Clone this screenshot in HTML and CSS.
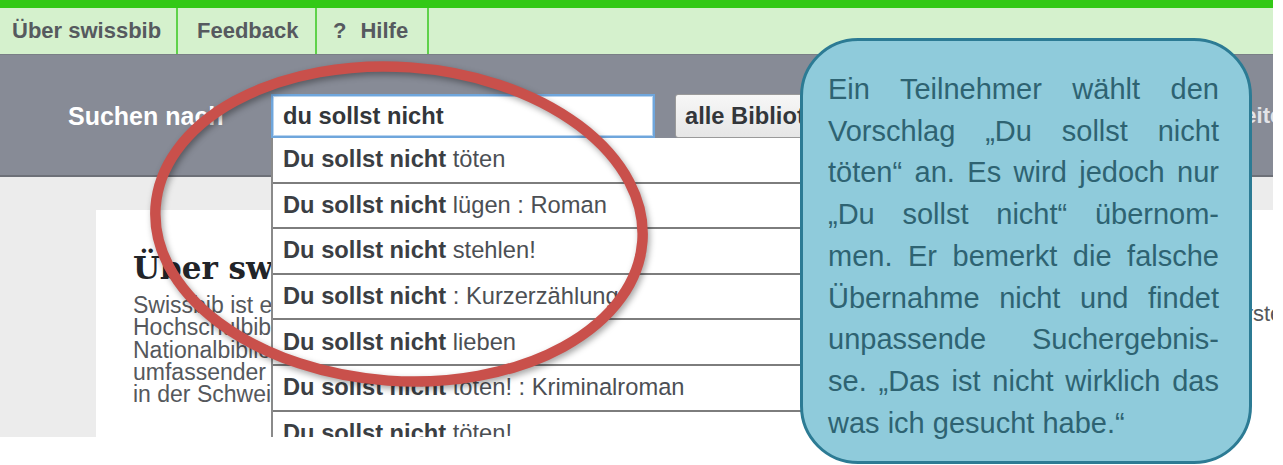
FILE: index.html
```html
<!DOCTYPE html>
<html lang="de">
<head>
<meta charset="utf-8">
<title>swissbib – Suche</title>
<link rel="stylesheet" href="styles.css">
</head>
<body>
<div class="stage">
  <div class="screen">
    <div class="topbar"></div>
    <nav class="nav">
      <a class="tab tab-first">Über swissbib</a>
      <a class="tab tab-second">Feedback</a>
      <a class="tab tab-third"><span class="q">?</span>Hilfe</a>
    </nav>
    <div class="searchbar">
      <span class="search-label">Suchen nach</span>
      <div class="search-field">
        <div class="search-input">du sollst nicht</div>
        <ul class="suggest">
          <li><b>Du sollst nicht</b> töten</li>
          <li><b>Du sollst nicht</b> lügen : Roman</li>
          <li><b>Du sollst nicht</b> stehlen!</li>
          <li><b>Du sollst nicht</b> : Kurzerzählung</li>
          <li><b>Du sollst nicht</b> lieben</li>
          <li><b>Du sollst nicht</b> töten! : Kriminalroman</li>
          <li><b>Du sollst nicht</b> töten!</li>
        </ul>
      </div>
      <div class="scope">alle Bibliotheken</div>
      <a class="advanced">Erweiterte Suche</a>
    </div>
    <div class="main">
      <div class="content">
        <div class="article">
          <h1>Über swissbib</h1>
          <p>
            <span class="line">Swissbib ist ein Metakatalog, der die Bestände der Schweizer Universitätsbibliotheken</span>
            <span class="line">Hochschulbibliotheken, der Schweizerischen</span>
            <span class="line">Nationalbibliothek und weiterer Bibliotheken</span>
            <span class="line">umfassender Nachweis wissenschaftlicher Literatur</span>
            <span class="line">in der Schweiz</span>
          </p>
        </div>
        <div class="aside">Erste Schritte</div>
      </div>
    </div>
  </div>

  <svg class="ring" width="1283" height="465" viewBox="0 0 1283 465">
    <ellipse cx="399" cy="224" rx="244" ry="157" transform="rotate(4 399 224)" fill="none" stroke="#c9504b" stroke-width="10.5"/>
  </svg>

  <div class="callout">
    <span class="cl">Ein Teilnehmer wählt den</span>
    <span class="cl">Vorschlag „Du sollst nicht</span>
    <span class="cl">töten“ an. Es wird jedoch nur</span>
    <span class="cl">„Du sollst nicht“ übernom-</span>
    <span class="cl">men. Er bemerkt die falsche</span>
    <span class="cl">Übernahme nicht und findet</span>
    <span class="cl">unpassende Suchergebnis-</span>
    <span class="cl">se. „Das ist nicht wirklich das</span>
    <span class="cl cl-last">was ich gesucht habe.“</span>
  </div>
</div>
</body>
</html>
```

FILE: styles.css
```css
* { box-sizing: border-box; }

body {
  margin: 0;
  background: #ffffff;
  font-family: "Liberation Sans", Arial, sans-serif;
}

.stage {
  position: relative;
  width: 1283px;
  height: 465px;
  overflow: hidden;
}

.screen {
  width: 1273px;
  height: 437px;
  overflow: hidden;
  background: #ececec;
}

.topbar {
  height: 8px;
  background: #33c916;
}

/* tab navigation */
.nav {
  display: flex;
  height: 47px;
  background: #d5f1cd;
  border-bottom: 1px solid #7a7f86;
}

.tab {
  flex: none;
  display: flex;
  align-items: center;
  border-right: 2px solid #5fd24a;
  font-size: 22px;
  font-weight: bold;
  color: #565a5f;
  white-space: nowrap;
}

.tab-first { width: 178px; padding-left: 12px; }
.tab-second { width: 139px; padding-left: 19px; }
.tab-third { width: 112px; padding-left: 16px; }

.q { margin-right: 14px; }

/* search row */
.searchbar {
  display: flex;
  align-items: center;
  height: 122px;
  padding-left: 68px;
  padding-top: 2px;
  background: #878b96;
  border-bottom: 2px solid #6d7078;
}

.searchbar > * { flex: none; }

.search-label {
  width: 203px;
  font-size: 25px;
  font-weight: bold;
  color: #ffffff;
}

.search-field {
  position: relative;
  width: 384px;
}

.search-input {
  height: 44px;
  padding-left: 10px;
  display: flex;
  align-items: center;
  background: #ffffff;
  border: 2px solid #6fa6dc;
  box-shadow: inset 0 0 0 1px #b9d4ef;
  font-size: 23.7px;
  font-weight: bold;
  color: #33363a;
}

.suggest {
  position: absolute;
  left: 0;
  top: 100%;
  width: 910px;
  margin: 0;
  padding: 0;
  list-style: none;
  background: #ffffff;
  border-left: 2px solid #8a8a8a;
  z-index: 2;
}

.suggest li {
  height: 45.6px;
  padding-left: 10px;
  display: flex;
  align-items: center;
  border-bottom: 2px solid #7d7d7d;
  font-size: 23.7px;
  color: #4c4f54;
  white-space: pre;
}

.suggest b { color: #3b3e43; }

.scope {
  width: 470px;
  height: 44px;
  margin-left: 20px;
  padding-left: 9px;
  display: flex;
  align-items: center;
  background: linear-gradient(#f7f7f7, #e6e6e6);
  border: 1px solid #9a9a9a;
  border-radius: 3px;
  font-size: 23.7px;
  font-weight: bold;
  color: #33363a;
}

.advanced {
  margin-left: 59px;
  font-size: 22px;
  font-weight: bold;
  color: #e3e4e8;
  white-space: nowrap;
}

/* page body */
.main {
  padding: 33px 0 0 96px;
}

.content {
  display: flex;
  height: 240px;
  background: #ffffff;
  padding-left: 37px;
}

.article {
  flex: none;
  width: 1098px;
  overflow: hidden;
}

.article h1 {
  margin: 37px 0 5px;
  height: 42px;
  line-height: 42px;
  font-family: "DejaVu Serif", Georgia, serif;
  font-size: 31px;
  font-weight: bold;
  color: #222428;
}

.article p {
  margin: 0;
  font-size: 23px;
  line-height: 22.25px;
  color: #55585c;
}

.line {
  display: block;
  white-space: nowrap;
}

.aside {
  padding-top: 93px;
  font-size: 22px;
  line-height: 22px;
  color: #55585c;
  white-space: nowrap;
}

/* annotation overlays */
.ring {
  position: absolute;
  left: 0;
  top: 0;
  z-index: 3;
  pointer-events: none;
  filter: drop-shadow(2px 3px 3px rgba(0, 0, 0, 0.35));
}

.callout {
  position: absolute;
  left: 800px;
  top: 38px;
  z-index: 4;
  width: 452px;
  height: 426px;
  padding: 28px 30px 0 25px;
  background: #8fcbdb;
  border: 3px solid #2c7b94;
  border-radius: 58px;
  font-size: 29px;
  line-height: 41.7px;
  color: #2e6372;
}

.cl {
  display: block;
  text-align: justify;
  text-align-last: justify;
}

.cl-last {
  text-align-last: left;
}
```
